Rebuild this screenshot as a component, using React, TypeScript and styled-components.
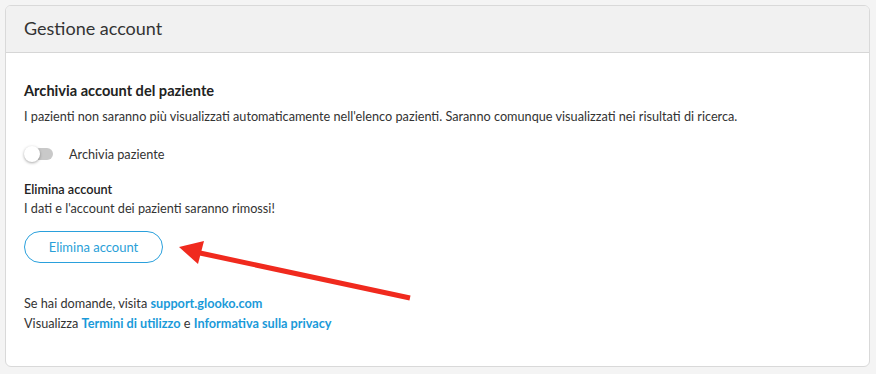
import React from "react";
import styled, { createGlobalStyle } from "styled-components";

const Global = createGlobalStyle`
  html, body { margin: 0; padding: 0; background: #f4f4f4; }
  body { font-family: Lato, "Open Sans", sans-serif; color: #333; }
`;

const Page = styled.div`
  padding: 5px 6px 5px 5px;
  position: relative;
`;

const Card = styled.section`
  background: #fff;
  border: 1px solid #d9d9d9;
  border-radius: 6px;
  overflow: hidden;
  height: 362px;
  box-sizing: border-box;
`;

const Header = styled.header`
  background: #f1f1f1;
  border-bottom: 1px solid #d6d6d6;
  height: 47px;
  display: flex;
  align-items: center;
  padding: 0 18px 2px;
  box-sizing: border-box;
`;

const Title = styled.h1`
  margin: 0;
  font-size: 18px;
  font-weight: 400;
  color: #333;
`;

const Body = styled.div`
  padding: 28px 18px 0;
  display: flex;
  flex-direction: column;
`;

const SectionTitle = styled.h2`
  margin: 0;
  font-size: 14.6px;
  font-weight: 700;
  color: #222;
  line-height: 20px;
`;

const Text = styled.p<{ $mt?: number }>`
  margin: ${(p) => p.$mt ?? 0}px 0 0;
  font-size: 12.7px;
  line-height: 19px;
  color: #333;
`;

const SubTitle = styled.h3`
  margin: 0;
  font-size: 12.7px;
  font-weight: 600;
  color: #222;
  line-height: 19px;
`;

const ToggleRow = styled.label`
  display: flex;
  align-items: center;
  gap: 16px;
  margin: 20px 0 18px;
  font-size: 12.7px;
  color: #333;
`;

const Track = styled.span`
  position: relative;
  width: 28px;
  height: 12px;
  border-radius: 6px;
  background: #c9c9c9;
  display: inline-block;
  margin-left: 1px;
`;

const Knob = styled.span`
  position: absolute;
  left: -1px;
  top: -2px;
  width: 16px;
  height: 16px;
  border-radius: 50%;
  background: #fff;
  box-shadow: 0 1px 3px rgba(0, 0, 0, 0.35);
`;

const OutlineButton = styled.button`
  margin-top: 13px;
  width: 139px;
  height: 32px;
  border: 1px solid #2aa0dc;
  border-radius: 16px;
  background: #fff;
  color: #2a9fd8;
  font-family: inherit;
  font-size: 13px;
  cursor: pointer;
`;

const Footer = styled.div`
  margin-top: 31px;
  display: flex;
  flex-direction: column;
`;

const Link = styled.a`
  color: #1a9ad9;
  font-weight: 700;
  text-decoration: none;
`;

const Arrow = styled.svg`
  position: absolute;
  left: 0;
  top: 0;
  pointer-events: none;
`;

export default function App() {
  return (
    <>
      <Global />
      <Page>
        <Card>
          <Header>
            <Title>Gestione account</Title>
          </Header>
          <Body>
            <SectionTitle>Archivia account del paziente</SectionTitle>
            <Text $mt={6}>
              I pazienti non saranno più visualizzati automaticamente nell'elenco pazienti. Saranno comunque visualizzati nei risultati di ricerca.
            </Text>
            <ToggleRow>
              <Track>
                <Knob />
              </Track>
              Archivia paziente
            </ToggleRow>
            <SubTitle>Elimina account</SubTitle>
            <Text>I dati e l'account dei pazienti saranno rimossi!</Text>
            <div>
              <OutlineButton>Elimina account</OutlineButton>
            </div>
            <Footer>
              <Text>
                Se hai domande, visita <Link href="#">support.glooko.com</Link>
              </Text>
              <Text $mt={1}>
                Visualizza <Link href="#">Termini di utilizzo</Link> e{" "}
                <Link href="#">Informativa sulla privacy</Link>
              </Text>
            </Footer>
          </Body>
        </Card>
        <Arrow width="876" height="374" viewBox="0 0 876 374">
          <line x1="410" y1="298" x2="200" y2="253" stroke="#f02a1e" strokeWidth="5" strokeLinecap="butt" />
          <polygon points="179,247 204,241 198,264" fill="#f02a1e" />
        </Arrow>
      </Page>
    </>
  );
}
